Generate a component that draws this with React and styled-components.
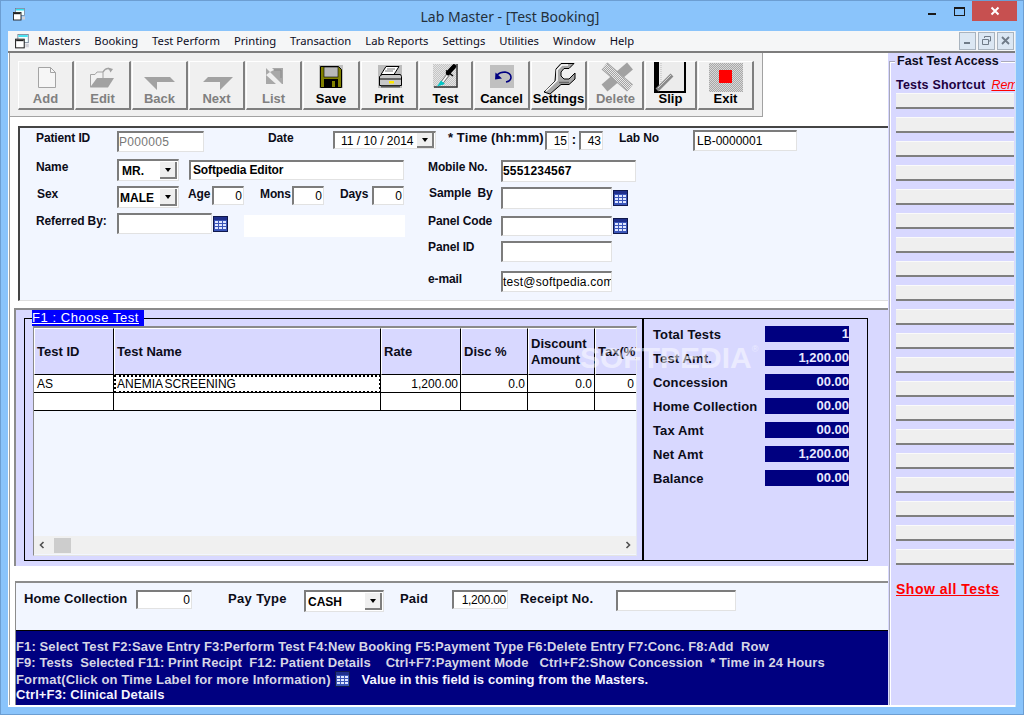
import React from 'react';
import styled, { createGlobalStyle } from 'styled-components';

const Global = createGlobalStyle`
  html, body { margin: 0; padding: 0; background: #8ac4fb; }
  * { box-sizing: border-box; }
  body { font-family: "Liberation Sans", Arial, sans-serif; color: #000; }
`;

const INPUT_EDGE = `
  background: #fff;
  border-top: 2px solid #7c7c7c;
  border-left: 2px solid #7c7c7c;
  border-right: 1px solid #e2e2e2;
  border-bottom: 1px solid #e2e2e2;
`;

const Win = styled.div`
  width: 1024px; height: 715px; display: flex; flex-direction: column; overflow: hidden;
  background: #8ac4fb; border: 1px solid #6c9ed2;
`;
const TitleBar = styled.div`
  height: 30px; flex: none; display: flex; align-items: flex-start; position: relative; padding-left: 12px; padding-top: 7px;
`;
const Title = styled.div`
  flex: 1; text-align: center; margin-left: 2px; padding-left: 64px;
  font: 14px/17px "Noto Sans", sans-serif; color: #24303c;
`;
const WinButtons = styled.div`
  display: flex; align-items: flex-start; margin-top: -7px; margin-right: 6px;
`;
const CloseBtn = styled.div`
  width: 45px; height: 20px; background: #c75050; display: flex; align-items: center; justify-content: center;
`;
const Client = styled.div`
  margin: 0 7px 0 7px; height: 676px; background: #fff; display: flex; flex-direction: column;
  border-right: 1px solid #cfe3f7;
`;
const MenuBar = styled.div`
  height: 22px; flex: none; background: #f5f6f7; border-bottom: 2px solid #7d7d7d; display: flex; align-items: center;
  padding-left: 7px;
`;
const MenuItems = styled.div`
  display: flex; gap: 14px; margin-left: 8px; font: 11.25px/16px "Noto Sans", sans-serif; color: #0c0c1e;
  margin-top: -1px; flex: 1;
`;
const MdiButtons = styled.div`
  display: flex; gap: 2px; margin-right: 1px; margin-top: -1px;
`;
const MdiBtn = styled.div`
  width: 17px; height: 18px; background: #dbe7f3; border: 1px solid #a9b4bf; display: flex; align-items: center; justify-content: center;
`;
const Body = styled.div`
  flex: 1; display: flex; min-height: 0; height: 652px;
`;
const Main = styled.div`
  width: 879px; height: 652px; flex: none; margin-left: 1px; border-left: 1px solid #a0a0a0; display: flex; flex-direction: column;
`;
const Toolbar = styled.div`
  width: 753px; height: 64px; flex: none; background: #f0f0f0; border-bottom: 1px solid #a2a2a2; border-right: 1px solid #a2a2a2;
  display: flex; gap: 1px; padding: 8px 0 0 8px; margin-bottom: 9px;
`;
const ToolBtn = styled.div`
  width: ${p => p.$w}px; height: 49px; flex: none; background: #f0f0f0; overflow: visible;
  border-top: 1px solid #fff; border-left: 1px solid #fff; border-right: 2px solid #7f7f7f; border-bottom: 2px solid #7f7f7f;
  display: flex; flex-direction: column; align-items: center; position: relative;
`;
const IconBox = styled.div`
  height: 29px; width: 100%; flex: none; overflow: visible; svg { display: block; overflow: visible; }
`;
const ToolLabel = styled.div`
  font: bold 13px/15px "Liberation Sans", sans-serif; color: ${p => p.$off ? '#808080' : '#000'}; white-space: nowrap; position: relative;
`;
const FormPanel = styled.div`
  margin-left: 8px; height: 175px; flex: none; background: #f2f6ff; border-top: 2px solid #444; border-left: 2px solid #444;
  border-bottom: 1px solid #dedede;
`;
const Row = styled.div`
  display: flex; align-items: flex-start; margin-top: ${p => p.$mt || 0}px; padding-left: ${p => p.$pl || 0}px;
`;
const Columns = styled.div`
  display: flex; margin-top: 6px;
`;
const LeftCol = styled.div` width: 400px; flex: none; padding-left: 16px; `;
const RightCol = styled.div` flex: 1; padding-left: 8px; `;
const Label = styled.div`
  font: bold ${p => p.$fs || 12}px/14px "Liberation Sans", sans-serif; width: ${p => p.$w}px; flex: none; white-space: pre;
  margin-left: ${p => p.$ml || 0}px; margin-top: ${p => p.$t || 0}px; padding-left: ${p => p.$pad || 0}px;
  letter-spacing: ${p => p.$ls ?? -0.12}px; color: #0c0c18;
`;
const Input = styled.div`
  ${INPUT_EDGE}
  width: ${p => p.$w}px; height: ${p => p.$h || 20}px; flex: none; overflow: hidden; white-space: nowrap;
  margin-left: ${p => p.$ml || 0}px; margin-top: ${p => p.$t || 0}px;
  padding: 0 ${p => p.$right ? 1 : 0}px 0 ${p => p.$pl ?? 2}px; text-align: ${p => p.$right ? 'right' : 'left'};
  font: ${p => p.$bold ? 'bold' : 'normal'} 12px/${p => (p.$h || 20) - 3}px "Liberation Sans", sans-serif;
  letter-spacing: ${p => p.$ls || 0}px; color: ${p => p.$grey ? '#777' : '#000'};
`;
const SelectBox = styled.div`
  ${INPUT_EDGE}
  width: ${p => p.$w}px; height: ${p => p.$h || 22}px; flex: none; display: flex; align-items: center; justify-content: space-between;
  padding: 0 1px 0 ${p => p.$pl ?? 2}px; margin-left: ${p => p.$ml || 0}px; white-space: nowrap;
  font: bold 12px/16px "Liberation Sans", sans-serif;
`;
const DropBtn = styled.div`
  width: 17px; height: ${p => p.$h || 17}px; flex: none; background: #efefef; border-right: 2px solid #7f7f7f; border-bottom: 2px solid #7f7f7f;
  display: flex; align-items: center; justify-content: center;
  &::after { content: ""; border: 3.5px solid transparent; border-top: 4px solid #000; border-bottom: 0; }
`;
const DateBox = styled(SelectBox)`
  font: normal 12px/14px "Liberation Sans", sans-serif; padding-left: 6px;
`;
const BlankBox = styled.div`
  width: 161px; height: 22px; flex: none; margin-left: 16px; margin-top: 2px; background: #fff;
`;
const CalWrap = styled.div`
  flex: none; margin-left: ${p => p.$ml ?? 1}px; margin-top: ${p => p.$t ?? 3}px; height: 16px; line-height: 0; display: ${p => p.$inline ? 'inline-block' : 'block'};
  vertical-align: ${p => p.$inline ? '-3px' : 'baseline'};
`;
const Colon = styled.div` width: 10px; flex: none; text-align: center; font: bold 13px/17px "Liberation Sans", sans-serif; `;

const TestPanel = styled.div`
  margin-left: 4px; margin-top: 7px; height: 258px; flex: none; background: #d8d8ff; border-top: 2px solid #8c8c8c; border-left: 2px solid #8c8c8c;
  padding: 8px 0 0 8px;
`;
const Fieldset = styled.div`
  width: 844px; height: 243px; border: 1px solid #000; display: flex; position: relative;
`;
const Legend = styled.div`
  position: absolute; left: 7px; top: -9px; width: 112px; height: 16px; background: #0000ff; color: #fff;
  font: 13px/15px "Liberation Sans", sans-serif; letter-spacing: .56px; text-decoration: underline; white-space: nowrap;
`;
const Watermark = styled.div`
  position: absolute; left: 555px; top: 21px; font: bold 30px/36px "Liberation Sans", sans-serif; color: rgba(255,255,255,.5); pointer-events: none; z-index: 3; white-space: nowrap;
  sup { font-size: 9px; font-weight: normal; vertical-align: 16px; line-height: 0; }
`;
const GridWrap = styled.div`
  width: 604px; height: 230px; flex: none; margin: 7px 0 0 8px; background: #f2f6ff;
  border-top: 2px solid #8a8a8a; border-left: 1px solid #8a8a8a; border-right: 1px solid #e4e8f2; border-bottom: 1px solid #e4e4e4;
  display: flex; flex-direction: column;
`;
const GridRow = styled.div`
  display: grid; grid-template-columns: 80px 267px 80px 67px 67px 41px; flex: none;
`;
const HeadCell = styled.div`
  height: 47px; background: #d8d8ff; border-right: 1px solid #000; border-left: 1px solid #fff; border-bottom: 1px solid #000; border-top: 1px solid #fff;
  display: flex; align-items: center; padding-left: 2px; overflow: hidden; white-space: pre-line;
  font: bold 13px/16px "Liberation Sans", sans-serif; color: #0c0c18; 
  &:last-child { border-right: 0; white-space: nowrap; }
`;
const Cell = styled.div`
  height: 18px; background: #fff; border-right: 1px solid #000; border-bottom: 1px solid #000; padding: 0 2px 0 3px;
  font: 12px/18px "Liberation Sans", sans-serif; text-align: ${p => p.$num ? 'right' : 'left'}; white-space: nowrap; word-spacing: ${p => p.$tight ? '-1.1px' : '0'};
  position: relative;
  ${p => p.$focus && 'outline: 2px dotted #000; outline-offset: -2px;'}
  &:last-child { border-right: 0; }
`;
const ScrollBar = styled.div`
  margin-top: auto; height: 18px; flex: none; background: #f0f0f0; display: flex; align-items: center; margin-bottom: 1px; padding: 0 4px;
`;
const Thumb = styled.div` width: 17px; height: 15px; margin-left: 8px; background: #cdcdcd; `;
const Summary = styled.div`
  flex: 1; margin-left: 5px; border-left: 2px solid #000; padding: 7px 0 0 9px; display: flex; flex-direction: column; gap: 8px;
`;
const SumRow = styled.div` display: flex; height: 16px; `;
const SumLabel = styled.div`
  width: 112px; flex: none; font: bold 13px/18px "Liberation Sans", sans-serif; color: #0c0c18; letter-spacing: .12px; white-space: nowrap;
`;
const SumValue = styled.div`
  width: 84px; flex: none; background: #000080; color: #e8e8ff; text-align: right; font: bold 13px/16px "Liberation Sans", sans-serif;
`;
const BottomPanel = styled.div`
  margin-left: 5px; margin-top: 15px; flex: none; height: 124px; border-top: 2px solid #8c8c8c; border-left: 1px solid #8c8c8c;
  background: #f2f6ff; display: flex; flex-direction: column;
`;
const PayRow = styled.div`
  height: 47px; flex: none; display: flex; align-items: flex-start; padding: 7px 0 0 8px;
`;
const HelpBox = styled.div`
  flex: 1; background: #000080; padding-top: 8px; color: #d6d6e6; font: bold 13px/16px "Liberation Sans", sans-serif; white-space: pre;
  border-top: 1px solid #000; letter-spacing: .09px;
`;
const HelpLine = styled.div`
  letter-spacing: ${p => p.$ls ?? 0.09}px; height: 16px; color: ${p => p.$bright ? '#f4f4ff' : 'inherit'};
`;
const FormatText = styled.span` letter-spacing: .18px; `;
const Bright = styled.span` color: #f4f4ff; `;

const Side = styled.div`
  width: 127px; flex: none; height: 652px; background: #d8d8ff; padding: 8px 0 0 1px; overflow: hidden;
`;
const SideSet = styled.div`
  height: 644px; border-top: 1px solid #aab; border-left: 1px solid #a8a8b8; position: relative; padding-left: 6px; box-shadow: inset 1px 1px 0 #fff;
`;
const SideLegend = styled.div`
  position: absolute; left: 5px; top: -8px; background: #d8d8ff; padding: 0 2px; font: bold 12.5px/15px "Liberation Sans", sans-serif; white-space: nowrap; color: #0c0c20; letter-spacing: .06px;
`;
const ShortcutHead = styled.div`
  margin-top: 16px; height: 15px; display: flex; font: bold 12.5px/15px "Liberation Sans", sans-serif; white-space: nowrap; color: #200040; letter-spacing: .2px;
`;
const RenLink = styled.span`
  margin-left: 6px; font: italic 12.5px/15px "Liberation Sans", sans-serif; color: #f00; text-decoration: underline; letter-spacing: 0;
`;
const ShortcutList = styled.div` display: flex; flex-direction: column; gap: 8px; `;
const ShortcutBtn = styled.div`
  width: 118px; height: 16px; background: #efefef; border-top: 1px solid #fafafa; border-bottom: 2px solid #7f7f7f;
`;
const ShowAll = styled.div`
  margin-top: 16px; font: bold 14px/16px "Liberation Sans", sans-serif; color: #f00; text-decoration: underline; letter-spacing: .5px; white-space: nowrap;
`;

const Dots = ({ id, a = '#c0c0c0', b = '#eeeeee' }) => (
  <pattern id={id} width="2" height="2" patternUnits="userSpaceOnUse">
    <rect width="2" height="2" fill={a} /><rect width="1" height="1" fill={b} /><rect x="1" y="1" width="1" height="1" fill={b} />
  </pattern>
);

const ICONS = {
  Add: (<>
    <path d="M38.5 67.5H50.5L55.5 72.5V87.5H38.5Z" fill="#f6f6f6" stroke="#a4a4a4" />
    <path d="M50.5 67.5V72.5H55.5" fill="none" stroke="#a4a4a4" />
  </>),
  Edit: (<>
    <path d="M90.5 87V74.5H95L97 72H103V78" fill="#f2f2f2" stroke="#a4a4a4" />
    <path d="M90 87.5L97 78H114L108 87.5Z" fill="#a2a2a2" />
    <path d="M103 72Q106 67 110 69" fill="none" stroke="#a2a2a2" strokeWidth="1.4" />
    <path d="M108 67.5L113 69L110.500 72.500Z" fill="#a2a2a2" />
  </>),
  Back: <path d="M144 77H170L175 82H157V90Z" fill="#a2a2a2" />,
  Next: <path d="M203 82L208 77H233L220 90V82Z" fill="#a2a2a2" />,
  List: (<>
    <rect x="266" y="68" width="17" height="16" fill="#a8a8a8" />
    <path d="M266 68H272L274 70L270 72Z M270 72L282 84H276L266 75Z" fill="#efefef" />
    <path d="M274 70L281 70V78" fill="none" stroke="#8a8a8a" />
  </>),
  Save: (<>
    <rect x="319" y="65" width="24" height="23" fill="#c0c0c0" />
    <path d="M320.500 66.500H338.500L341.500 69.500V87.500H320.500Z" fill="#808000" stroke="#000" />
    <rect x="324" y="67" width="14" height="10" fill="#b8b8b8" stroke="#000" strokeWidth=".6" />
    <rect x="324" y="79" width="14" height="9" fill="#000" />
    <rect x="332" y="81" width="3" height="6" fill="#808000" />
  </>),
  Print: (<>
    <rect x="378" y="65" width="24" height="23" fill="#bdbdbd" />
    <path d="M386 66.500H399L394 74.500H381Z" fill="#fff" stroke="#000" />
    <path d="M387 69H395M385 71H393" stroke="#555" strokeWidth=".8" />
    <path d="M379.500 76.500L382 74.500H400.500L401.500 76.500V85.500H379.500Z" fill="#c8c8c8" stroke="#000" />
    <path d="M379.500 79H401.500" stroke="#000" />
    <rect x="389" y="81" width="5" height="2.500" fill="#ffe800" />
    <rect x="381" y="85.500" width="19" height="2" fill="#555" />
  </>),
  Test: (<>
    <rect x="433" y="64" width="25" height="24" fill="url(#dotsA)" />
    <path d="M457 64V87H434" fill="none" stroke="#333" strokeWidth="1.500" />
    <path d="M441 84L450 72" stroke="#777" strokeWidth="3.500" />
    <path d="M441 84L450 72" stroke="#fff" strokeWidth="1.500" />
    <path d="M448 73L454 66.500" stroke="#000" strokeWidth="4.500" strokeLinecap="round" />
    <path d="M446 70.500L453 76" stroke="#000" strokeWidth="1.500" />
    <path d="M437 86.500L441 80.500L445 84Z" fill="#00c8c8" />
  </>),
  Cancel: (<>
    <rect x="490" y="65" width="24" height="23" fill="#c0c0c0" />
    <path d="M497 75Q500 72 505 72Q511 73 511 77.500Q511 81 506 82" fill="none" stroke="#000080" strokeWidth="1.500" />
    <path d="M495 79.500L495.500 72.500L502 78.500Z" fill="#000080" />
  </>),
  Settings: (<>
    <path d="M544 92L555 81L556 69L561 63.500H574L569 68.500H564L561 72V76L564 79H569L575 73V79L569 84.500H561L550 94Z" fill="#a8a8a8" stroke="#000" />
    <path d="M546 91L557 80.500V70L562 65H568" fill="none" stroke="#fff" strokeWidth="1.500" />
    <path d="M559 82.500H569" stroke="#666" strokeWidth="1.500" />
  </>),
  Delete: (<>
    <path d="M604.500 66L630 88" stroke="#a2a2a2" strokeWidth="9" />
    <path d="M630 66L604.500 88" stroke="#a2a2a2" strokeWidth="9" />
    <path d="M604.500 66L630 88" stroke="url(#dotsB)" strokeWidth="7" />
  </>),
  Slip: (<>
    <rect x="654" y="62" width="32" height="31" fill="#ececec" />
    <rect x="654" y="62" width="5" height="31" fill="#000" />
    <rect x="684" y="62" width="2" height="31" fill="#000" />
    <rect x="654" y="91" width="32" height="2" fill="#000" />
    <path d="M661 63V89" stroke="#bbb" strokeDasharray="1 1" />
    <path d="M657 90L672 75" stroke="#8a8a8a" strokeWidth="4" />
    <path d="M658 88L671 75" stroke="#d4d4d4" strokeWidth="1" />
  </>),
  Exit: (<>
    <rect x="709" y="63" width="34" height="29" fill="url(#dotsC)" />
    <rect x="719" y="70" width="13" height="13" fill="#f00" />
  </>),
};

const TOOLS = [
  ['Add', 56, 18, true], ['Edit', 56, 75, true], ['Back', 56, 132, true], ['Next', 56, 189, true], ['List', 56, 246, true],
  ['Save', 57, 303], ['Print', 57, 361], ['Test', 54, 419], ['Cancel', 56, 474], ['Settings', 56, 531],
  ['Delete', 56, 588, true], ['Slip', 52, 645], ['Exit', 56, 698],
];

const Cal = () => (
  <svg width="15" height="16" viewBox="0 0 15 16">
    <rect width="15" height="16" fill="#10184c" />
    <rect x="1" y="1" width="13" height="14" fill="#3a55b8" />
    <rect x="1" y="1" width="13" height="3" fill="#1f2f8c" />
    {[5, 8, 11].map(y => [2, 6, 10].map(x => <rect key={x + '-' + y} x={x} y={y} width="3" height="2" fill="#dfe6ff" />))}
  </svg>
);

const AppIcon = ({ s = 13 }) => (
  <svg width={s} height={s} viewBox="0 0 13 13">
    <rect x="2.500" y="0.500" width="9" height="7" fill="#f4ffff" stroke="#6a7a90" strokeWidth=".7" />
    <rect x="3" y="1" width="8" height="1.500" fill="#30e0f0" />
    <rect x="0.500" y="4.500" width="7.500" height="7.500" fill="#fff" stroke="#222" strokeWidth=".9" />
    <rect x="1" y="5" width="6.500" height="1.200" fill="#222" />
    <path d="M9 8.500H12V11.500H9" fill="#d0d0d8" />
  </svg>
);

const rowsSum = [
  ['Total Tests', '1'], ['Test Amt.', '1,200.00'], ['Concession', '00.00'], ['Home Collection', '00.00'],
  ['Tax Amt', '00.00'], ['Net Amt', '1,200.00'], ['Balance', '00.00'],
];

export default function App() {
  return (
    <Win>
      <Global />
      <TitleBar>
        <AppIcon />
        <Title>Lab Master - [Test Booking]</Title>
        <WinButtons>
          <svg width="44" height="20" viewBox="0 0 44 20">
            <rect x="0" y="12" width="8" height="2" fill="#1a1a1a" />
            <rect x="26.500" y="6.500" width="10" height="8" fill="none" stroke="#1a1a1a" />
            <rect x="26" y="6" width="11" height="2" fill="#1a1a1a" />
          </svg>
          <CloseBtn>
            <svg width="10" height="10" viewBox="0 0 10 10"><path d="M1.500 1.500L8.500 8.500M8.500 1.500L1.500 8.500" stroke="#fff" strokeWidth="2" /></svg>
          </CloseBtn>
        </WinButtons>
      </TitleBar>
      <Client>
        <MenuBar>
          <AppIcon s={15} />
          <MenuItems>
            {['Masters', 'Booking', 'Test Perform', 'Printing', 'Transaction', 'Lab Reports', 'Settings', 'Utilities', 'Window', 'Help'].map(m => <span key={m}>{m}</span>)}
          </MenuItems>
          <MdiButtons>
            <MdiBtn><svg width="9" height="9" viewBox="0 0 9 9"><rect x="1" y="6" width="6" height="2" fill="#6f7b88" /></svg></MdiBtn>
            <MdiBtn><svg width="9" height="9" viewBox="0 0 9 9"><path d="M2.500 2V.5H8.500V5H6.500M.5 3.500H6.500V8.500H.5Z" fill="none" stroke="#6f7b88" /></svg></MdiBtn>
            <MdiBtn><svg width="9" height="9" viewBox="0 0 9 9"><path d="M1 1L8 8M8 1L1 8" stroke="#6f7b88" strokeWidth="1.800" /></svg></MdiBtn>
          </MdiButtons>
        </MenuBar>
        <Body>
          <Main>
            <Toolbar>
              <svg width="0" height="0" style={{ position: 'absolute' }}>
                <defs>
                  <Dots id="dotsA" a="#c4c4c4" b="#e4e4e4" />
                  <Dots id="dotsB" a="#a2a2a2" b="#e8e8e8" />
                  <Dots id="dotsC" a="#a8a8a8" b="#d8d8d8" />
                </defs>
              </svg>
              {TOOLS.map(([name, w, x, off]) => (
                <ToolBtn key={name} $w={w}>
                  <IconBox>
                    <svg width={w - 3} height="32" viewBox={`${x + 1} 62 ${w - 3} 32`}>{ICONS[name]}</svg>
                  </IconBox>
                  <ToolLabel $off={off}>{name}</ToolLabel>
                </ToolBtn>
              ))}
            </Toolbar>

            <FormPanel>
              <Row $mt={3} $pl={16}>
                <Label $w={81}>Patient ID</Label>
                <Input $w={87} $h={21} $grey $ls={.3} $pl={0}>P000005</Input>
                <Label $ml={64} $w={65}>Date</Label>
                <DateBox $w={103} $h={18}>11 / 10 / 2014<DropBtn $h={15} /></DateBox>
                <Label $ml={12} $w={97} $fs={13} $ls={.1} $t={0}>* Time (hh:mm)</Label>
                <Input $w={24} $h={19} $right>15</Input>
                <Colon>:</Colon>
                <Input $w={24} $h={19} $right>43</Input>
                <Label $ml={16} $w={74}>Lab No</Label>
                <Input $w={104} $h={21} $t={-1}>LB-0000001</Input>
              </Row>
              <Columns>
                <LeftCol>
                  <Row $mt={1}>
                    <Label $w={81} $t={1}>Name</Label>
                    <SelectBox $w={62} $pl={3}>MR.<DropBtn /></SelectBox>
                    <Input $w={215} $ml={10} $t={1} $bold $ls={-.15}>Softpedia Editor</Input>
                  </Row>
                  <Row $mt={5}>
                    <Label $w={81} $pad={1} $t={1}>Sex</Label>
                    <SelectBox $w={62} $pl={1}>MALE<DropBtn /></SelectBox>
                    <Label $ml={9} $w={24} $t={1}>Age</Label>
                    <Input $w={32} $h={19} $right>0</Input>
                    <Label $ml={16} $w={32} $t={1}>Mons</Label>
                    <Input $w={32} $h={19} $right>0</Input>
                    <Label $ml={16} $w={32} $t={1}>Days</Label>
                    <Input $w={32} $h={19} $right>0</Input>
                  </Row>
                  <Row $mt={5}>
                    <Label $w={81} $t={1}>Referred By:</Label>
                    <Input $w={95} $h={21} />
                    <CalWrap><Cal /></CalWrap>
                    <BlankBox />
                  </Row>
                </LeftCol>
                <RightCol>
                  <Row $mt={2}>
                    <Label $w={73}>Mobile No.</Label>
                    <Input $w={135} $h={22} $bold $ls={.2} $pl={0}>5551234567</Input>
                  </Row>
                  <Row $mt={5}>
                    <Label $w={73} $t={-1} $pad={1}>{'Sample  By'}</Label>
                    <Input $w={111} $h={22} />
                    <CalWrap><Cal /></CalWrap>
                  </Row>
                  <Row $mt={7}>
                    <Label $w={73} $t={-2}>Panel Code</Label>
                    <Input $w={111} $h={20} />
                    <CalWrap $t={2}><Cal /></CalWrap>
                  </Row>
                  <Row $mt={5}>
                    <Label $w={73} $t={-1}>Panel ID</Label>
                    <Input $w={111} $h={21} />
                  </Row>
                  <Row $mt={9}>
                    <Label $w={73} $t={1}>e-mail</Label>
                    <Input $w={111} $h={21} $pl={0} $ls={.25}>test@softpedia.com</Input>
                  </Row>
                </RightCol>
              </Columns>
            </FormPanel>

            <TestPanel>
              <Fieldset>
                <Legend>F1 : Choose Test</Legend>
                <Watermark>SOFTPEDIA<sup>®</sup></Watermark>
                <GridWrap>
                  <GridRow>
                    <HeadCell>Test ID</HeadCell>
                    <HeadCell>Test Name</HeadCell>
                    <HeadCell>Rate</HeadCell>
                    <HeadCell>Disc %</HeadCell>
                    <HeadCell>{'Discount\nAmount'}</HeadCell>
                    <HeadCell>Tax(%)</HeadCell>
                  </GridRow>
                  <GridRow>
                    <Cell>AS</Cell>
                    <Cell $focus $tight>ANEMIA SCREENING</Cell>
                    <Cell $num>1,200.00</Cell>
                    <Cell $num>0.0</Cell>
                    <Cell $num>0.0</Cell>
                    <Cell $num>0</Cell>
                  </GridRow>
                  <GridRow>
                    <Cell /><Cell /><Cell /><Cell /><Cell /><Cell />
                  </GridRow>
                  <ScrollBar>
                    <svg width="8" height="10" viewBox="0 0 8 10"><path d="M5.500 2L2.500 5L5.500 8" fill="none" stroke="#505050" strokeWidth="1.600" /></svg>
                    <Thumb />
                    <svg style={{ marginLeft: 'auto' }} width="8" height="10" viewBox="0 0 8 10"><path d="M2.500 2L5.500 5L2.500 8" fill="none" stroke="#505050" strokeWidth="1.600" /></svg>
                  </ScrollBar>
                </GridWrap>
                <Summary>
                  {rowsSum.map(([l, v]) => (
                    <SumRow key={l}><SumLabel>{l}</SumLabel><SumValue>{v}</SumValue></SumRow>
                  ))}
                </Summary>
              </Fieldset>
            </TestPanel>

            <BottomPanel>
              <PayRow>
                <Label $fs={13} $w={112} $t={2} $ls={.05}>Home Collection</Label>
                <Input $w={56} $h={19} $right>0</Input>
                <Label $fs={13} $ml={36} $w={76} $t={2} $ls={.35}>Pay Type</Label>
                <SelectBox $w={80}>CASH<DropBtn /></SelectBox>
                <Label $fs={13} $ml={16} $w={52} $t={2} $ls={.2}>Paid</Label>
                <Input $w={56} $h={19} $right $ls={-.3}>1,200.00</Input>
                <Label $fs={13} $ml={12} $w={96} $t={2} $ls={.15}>Receipt No.</Label>
                <Input $w={120} $h={21} />
              </PayRow>
              <HelpBox>
                <HelpLine $ls={.11}>{'F1: Select Test F2:Save Entry F3:Perform Test F4:New Booking F5:Payment Type F6:Delete Entry F7:Conc. F8:Add  Row'}</HelpLine>
                <HelpLine $ls={.08}>{'F9: Tests  Selected F11: Print Recipt  F12: Patient Details    Ctrl+F7:Payment Mode   Ctrl+F2:Show Concession  * Time in 24 Hours'}</HelpLine>
                <HelpLine><FormatText>{'Format(Click on Time Label for more Information) '}</FormatText><CalWrap $inline $ml={1} $t={0}><Cal /></CalWrap><Bright>{'   Value in this field is coming from the Masters.'}</Bright></HelpLine>
                <HelpLine $bright $ls={.12}>Ctrl+F3: Clinical Details</HelpLine>
              </HelpBox>
            </BottomPanel>
          </Main>
          <Side>
            <SideSet>
              <SideLegend>Fast Test Access</SideLegend>
              <ShortcutHead>Tests Shortcut<RenLink>Remove</RenLink></ShortcutHead>
              <ShortcutList>
                {Array.from({ length: 20 }, (_, i) => <ShortcutBtn key={i} />)}
              </ShortcutList>
              <ShowAll>Show all Tests</ShowAll>
            </SideSet>
          </Side>
        </Body>
      </Client>
    </Win>
  );
}
